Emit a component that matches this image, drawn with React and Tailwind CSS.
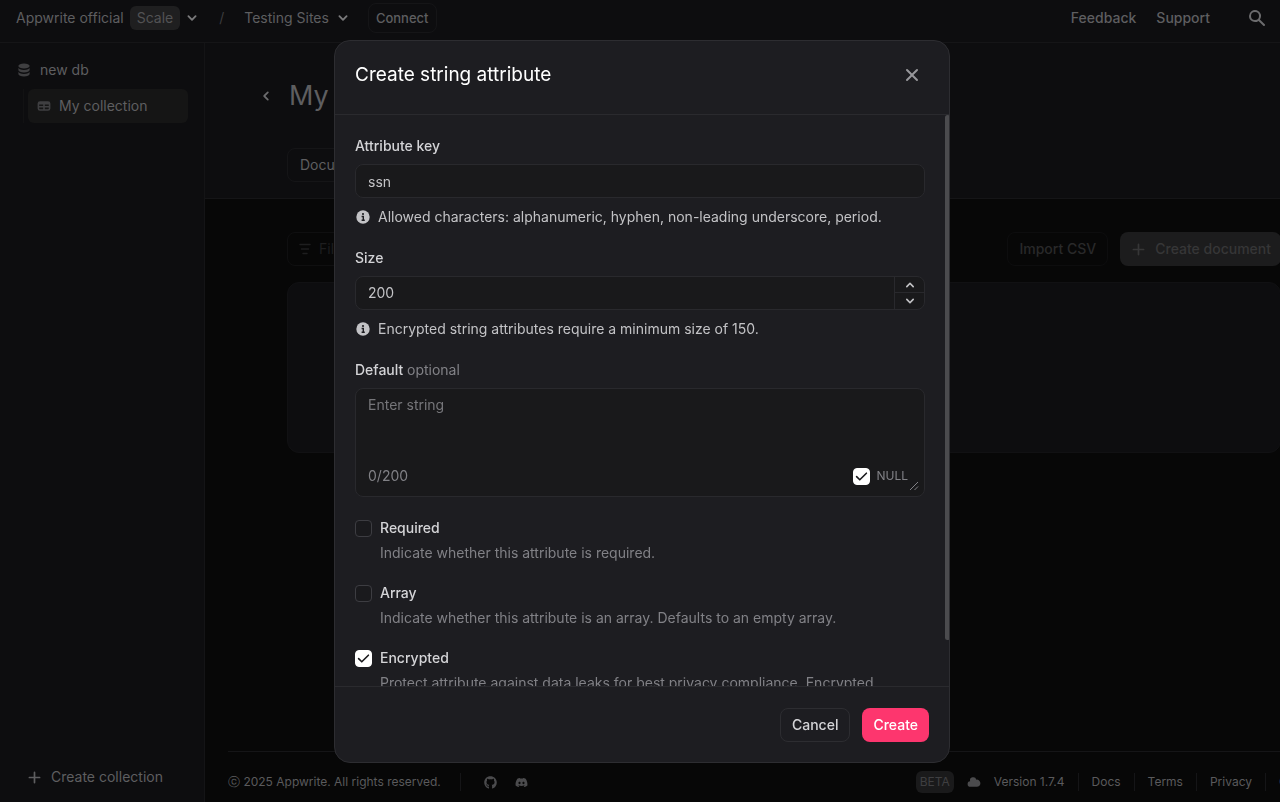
import { useState } from "react";
import {
  HiChevronDown,
  HiChevronLeft,
  HiChevronUp,
  HiCloud,
  HiDatabase,
  HiPlus,
  HiSearch,
  HiTable,
  HiX,
} from "react-icons/hi";
import { FaDiscord, FaGithub } from "react-icons/fa";

function InfoIcon() {
  return (
    <svg viewBox="0 0 14 14" className="size-[14px] shrink-0" aria-hidden="true">
      <circle cx="7" cy="7" r="6.7" fill="#c3c3c6" />
      <circle cx="7" cy="4" r="1.1" fill="#1d1d21" />
      <path d="M5.6 6.5h1.7v3.6M5.6 10.3h3.2" fill="none" stroke="#1d1d21" strokeWidth="1.4" />
    </svg>
  );
}

function FilterIcon() {
  return (
    <svg viewBox="0 0 12 12" className="size-3" fill="none" stroke="currentColor" strokeWidth="1.5" strokeLinecap="round" aria-hidden="true">
      <path d="M1 1.5h10M2.5 6h7M4 10.5h4" />
    </svg>
  );
}

function Checkbox({ id, checked, onChange }) {
  return (
    <span className="relative flex size-[17px] shrink-0">
      <input
        id={id}
        type="checkbox"
        checked={checked}
        onChange={onChange}
        className="peer size-[17px] appearance-none rounded-[4px] border border-[#3d3d42] bg-[#1a1a1d] checked:border-white checked:bg-white"
      />
      <svg
        viewBox="0 0 17 17"
        className="pointer-events-none absolute inset-0 hidden size-[17px] peer-checked:block"
        fill="none"
        stroke="#19191c"
        strokeWidth="1.6"
        strokeLinecap="round"
        strokeLinejoin="round"
        aria-hidden="true"
      >
        <path d="M3.6 8.6l3.2 3.2 6.6-6.6" />
      </svg>
    </span>
  );
}

function Option({ id, label, text, initial }) {
  const [checked, setChecked] = useState(initial);
  return (
    <div className="flex gap-2">
      <div className="flex h-[22px] items-center">
        <Checkbox id={id} checked={checked} onChange={() => setChecked(!checked)} />
      </div>
      <div className="flex flex-col gap-[3px]">
        <label htmlFor={id} className="font-medium text-[#d4d4d7]">{label}</label>
        <p className="text-[#818186]">{text}</p>
      </div>
    </div>
  );
}

function Hint({ children }) {
  return (
    <p className="mt-2 flex items-center gap-2 pl-px text-[#c3c3c6]">
      <InfoIcon />
      {children}
    </p>
  );
}

function TopBar() {
  return (
    <header className="flex h-[43px] shrink-0 items-center border-b border-[#151517] bg-[#0d0d0f] pr-[13px] pb-1.5 pl-4 text-[#5e5e60]">
      <button className="flex items-center gap-[3px]">
        <span className="flex items-center gap-1.5">
          Appwrite official
          <span className="rounded-md bg-[#1f1f20] px-[7px] py-px text-[#525254]">Scale</span>
        </span>
        <HiChevronDown className="size-[18px] text-[#7a7a7c]" />
      </button>
      <span className="mr-5 ml-[18px] text-[#3c3c3e]">/</span>
      <button className="flex items-center gap-[5px]">
        Testing Sites
        <HiChevronDown className="size-[18px] text-[#7a7a7c]" />
      </button>
      <button className="ml-4 h-[30px] rounded-lg border border-[#151517] px-[7px] text-[13px] font-medium">Connect</button>
      <nav className="ml-auto flex items-center gap-5 font-medium">
        <a href="#feedback">Feedback</a>
        <a href="#support">Support</a>
        <button aria-label="Search" className="ml-[17px]">
          <HiSearch className="size-5 text-[#6b6b6d]" />
        </button>
      </nav>
    </header>
  );
}

function Sidebar() {
  return (
    <aside className="flex w-[205px] shrink-0 flex-col border-r border-[#141416] bg-[#0d0d0f] pt-4 pb-[14px] text-[#5e5e60]">
      <a href="#db" className="ml-4 flex items-center gap-2">
        <HiDatabase className="size-4 text-[#3f3f41]" />
        new db
      </a>
      <div className="mt-2 mr-4 ml-[23px] border-l border-[#121213] pl-1">
        <a href="#collection" className="flex h-[34px] items-center gap-[7px] rounded-md bg-[#151515] px-2">
          <HiTable className="size-4 text-[#3f3f41]" />
          My collection
        </a>
      </div>
      <button className="mt-auto ml-[26px] flex items-center gap-2">
        <HiPlus className="size-[17px]" />
        Create collection
      </button>
    </aside>
  );
}

function PageFooter() {
  return (
    <footer className="mt-auto ml-[23px] flex items-center border-t border-[#151517] pt-[19px] pr-[5px] pb-[9px] text-[12px] leading-[22px] text-[#5a5a5c]">
      <span className="whitespace-nowrap">ⓒ 2025 Appwrite. All rights reserved.</span>
      <span className="mr-[17px] ml-[19px] h-[18px] w-px bg-[#151517]" />
      <a href="#github" aria-label="GitHub" className="ml-1.5"><FaGithub className="size-[13px] text-[#4b4b4d]" /></a>
      <a href="#discord" aria-label="Discord" className="ml-[18px]"><FaDiscord className="size-[13px] text-[#4b4b4d]" /></a>
      <div className="ml-auto flex items-center">
        <span className="rounded-md bg-[#1a1a1b] px-1 text-[#3f3f41]">BETA</span>
        <HiCloud className="ml-3 size-4 text-[#4b4b4d]" />
        <a href="#version" className="ml-3 whitespace-nowrap">Version 1.7.4</a>
        {["Docs", "Terms", "Privacy", "Cookies"].map((name) => (
          <a key={name} href="#info" className="flex items-center">
            <span className="mx-[13px] h-[18px] w-px bg-[#151517]" />
            {name}
          </a>
        ))}
      </div>
    </footer>
  );
}

function Main() {
  return (
    <main className="min-w-0 grow overflow-hidden bg-[#070707]">
      <div className="-mr-[50px] flex h-full flex-col">
        <section className="h-[156px] shrink-0 border-b border-[#151517] bg-[#0d0d0f] pt-[35px] pl-[52px]">
          <div className="flex items-center gap-3.5">
            <a href="#back" aria-label="Back"><HiChevronLeft className="size-[18px] text-[#6b6b6d]" /></a>
            <h1 className="text-[27px] leading-9 text-[#5e5e60]">My collection</h1>
          </div>
          <div className="mt-[34px] ml-[30px] flex">
            <button className="h-[34px] rounded-lg border border-[#151517] px-3 text-[#5e5e60]">Documents</button>
          </div>
        </section>
        <div className="mt-[33px] mr-[49px] ml-[82px] flex items-center gap-3">
          <button className="mr-auto flex h-[34px] items-center gap-2 rounded-lg border border-[#0f0f10] px-[11px] text-[#1e1e1f]">
            <FilterIcon />
            Filters
          </button>
          <button className="h-[34px] rounded-lg border border-[#0d0d0e] px-[11px] font-medium text-[#29292a]">Import CSV</button>
          <button className="flex h-[34px] items-center gap-2 rounded-lg bg-[#1c1c1d] px-2.5 font-medium text-[#363637]">
            <HiPlus className="size-[17px]" />
            Create document
          </button>
        </div>
        <div className="mt-4 mr-[49px] ml-[82px] h-[171px] rounded-xl border border-[#111113] bg-[#0d0d0f]" />
        <PageFooter />
      </div>
    </main>
  );
}

function AttributeDialog() {
  const [key, setKey] = useState("ssn");
  const [size, setSize] = useState(200);
  const [value, setValue] = useState("");
  const [isNull, setIsNull] = useState(true);
  const field = "w-full rounded-lg border border-[#29292d] bg-[#19191b] text-[#c3c3c6] outline-none";
  return (
    <div className="fixed inset-0 flex items-center justify-center pt-10 pb-[39px] pl-1">
      <form
        role="dialog"
        aria-labelledby="dialog-title"
        onSubmit={(event) => event.preventDefault()}
        className="flex max-h-full w-full max-w-[616px] flex-col overflow-hidden rounded-2xl border border-[#2d2d31] bg-[#1d1d21]"
      >
        <div className="flex shrink-0 justify-between border-b border-[#2a2a2e] px-5 pt-5 pb-[25px]">
          <h2 id="dialog-title" className="text-[19px] leading-7 text-white">Create string attribute</h2>
          <button type="button" aria-label="Close" className="mr-[7px]"><HiX className="size-5 text-[#97979b]" /></button>
        </div>
        <div className="relative flex min-h-0 flex-col">
          <div className="overflow-y-auto pt-5 pr-6 pb-5 pl-5 [scrollbar-width:none]">
            <label htmlFor="key" className="block font-medium text-[#d4d4d7]">Attribute key</label>
            <input id="key" value={key} onChange={(e) => setKey(e.target.value)} className={`${field} mt-[7px] h-[34px] px-3`} />
            <Hint>Allowed characters: alphanumeric, hyphen, non-leading underscore, period.</Hint>

            <label htmlFor="size" className="mt-[19px] block font-medium text-[#d4d4d7]">Size</label>
            <div className={`${field} mt-[7px] flex h-[34px]`}>
              <input id="size" inputMode="numeric" value={size} onChange={(e) => setSize(Number(e.target.value) || 0)} className="min-w-0 grow px-3 outline-none" />
              <div className="flex w-[30px] shrink-0 flex-col border-l border-[#29292d]">
                <button type="button" aria-label="Increase" onClick={() => setSize(size + 1)} className="flex h-4 items-center justify-center border-b border-[#29292d]">
                  <HiChevronUp className="size-4" />
                </button>
                <button type="button" aria-label="Decrease" onClick={() => setSize(size - 1)} className="flex h-4 items-center justify-center">
                  <HiChevronDown className="size-4" />
                </button>
              </div>
            </div>
            <Hint>Encrypted string attributes require a minimum size of 150.</Hint>

            <label htmlFor="default" className="mt-[19px] block font-medium text-[#d4d4d7]">
              Default <span className="font-normal text-[#818186]">optional</span>
            </label>
            <div className={`${field} relative mt-[7px] flex h-[109px] flex-col pt-[5px] pr-4 pb-[9px] pl-3`}>
              <textarea
                id="default"
                placeholder="Enter string"
                value={value}
                onChange={(e) => setValue(e.target.value)}
                className="min-h-0 w-full grow resize-none outline-none placeholder:text-[#76767a]"
              />
              <div className="flex items-center justify-between text-[#818186]">
                <span>{value.length}/200</span>
                <span className="flex items-center gap-1.5">
                  <Checkbox id="null" checked={isNull} onChange={() => setIsNull(!isNull)} />
                  <label htmlFor="null" className="text-[12px] leading-[22px]">NULL</label>
                </span>
              </div>
              <svg viewBox="0 0 10 10" className="absolute right-[5px] bottom-[5px] size-[10px]" stroke="#818186" aria-hidden="true">
                <path d="M1 9l8-8M5.5 9L9 5.5" />
              </svg>
            </div>

            <div className="mt-5 flex flex-col gap-[18px]">
              <Option id="required" label="Required" text="Indicate whether this attribute is required." initial={false} />
              <Option id="array" label="Array" text="Indicate whether this attribute is an array. Defaults to an empty array." initial={false} />
              <Option
                id="encrypted"
                label="Encrypted"
                text={<>Protect attribute against data leaks for best privacy compliance. Encrypted<br />attributes cannot be queried.</>}
                initial={true}
              />
            </div>
          </div>
          <div className="absolute top-0 -right-px h-[92%] w-[5px] rounded-full bg-[#4b4b4e]" />
        </div>
        <div className="flex shrink-0 justify-end gap-3 border-t border-[#2a2a2e] px-5 pt-[21px] pb-5 font-medium">
          <button type="button" className="h-[34px] rounded-lg border border-[#2d2d31] px-[11px] text-[#d4d4d7]">Cancel</button>
          <button type="submit" className="h-[34px] rounded-lg bg-[#fd366e] px-[11px] text-white">Create</button>
        </div>
      </form>
    </div>
  );
}

export default function App() {
  return (
    <div className="flex h-screen flex-col overflow-hidden bg-[#070707] font-['Inter',sans-serif] text-[14px] leading-[22px]">
      <TopBar />
      <div className="flex min-h-0 grow">
        <Sidebar />
        <Main />
      </div>
      <AttributeDialog />
    </div>
  );
}
